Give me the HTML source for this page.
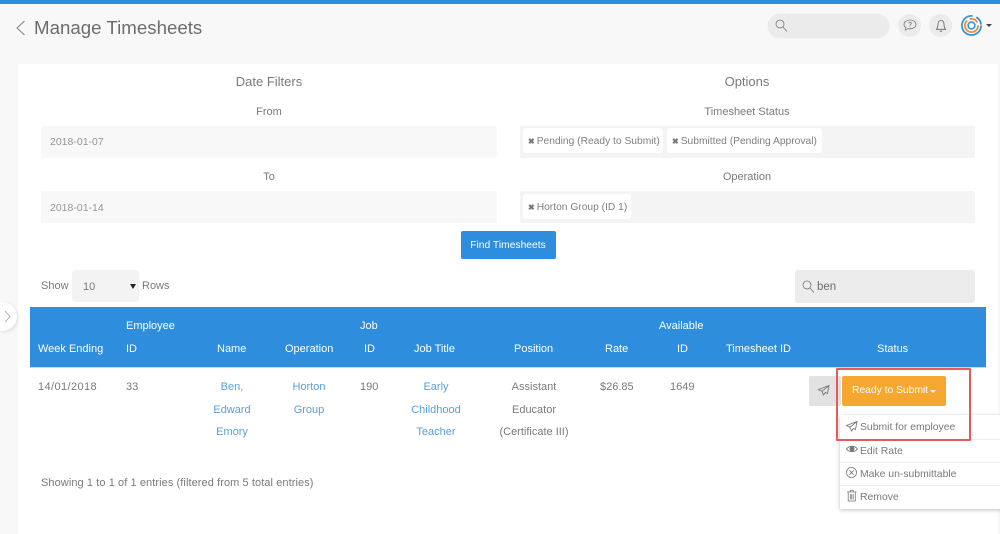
<!DOCTYPE html>
<html>
<head>
<meta charset="utf-8">
<style>
html,body{margin:0;padding:0;width:1000px;height:534px;overflow:hidden;background:#f8f8f8;font-family:"Liberation Sans",sans-serif;color:#7a7a7a;}
.a{position:absolute;}
.t{position:absolute;white-space:nowrap;font-size:11px;line-height:14px;}
.c{transform:translateX(-50%);}
.l{color:#5a9fd9;}
.h{color:#fff;font-weight:400;font-size:11px;}
.chip{position:absolute;background:#fff;border-radius:3px;height:25px;line-height:27px;font-size:10.25px;white-space:nowrap;color:#808080;box-sizing:border-box;padding-left:5px;}
.chip b{font-size:8px;color:#777;margin-right:2px;}
.inp{position:absolute;background:#f4f4f4;border-radius:2px;}
svg{position:absolute;overflow:visible;}
</style>
</head>
<body>
<div class="a" style="left:0;top:0;width:1000px;height:4px;background:#2e8ddc;"></div>

<svg style="left:15px;top:20px" width="12" height="16" fill="none" stroke="#777" stroke-width=".9"><path d="M9.5 1 L2 8 L9.5 15"/></svg>
<div class="t" style="left:34px;top:16px;font-size:18.7px;line-height:24px;color:#6c6c6c;">Manage Timesheets</div>

<div class="a" style="left:768px;top:14px;width:121px;height:24px;background:#ebebeb;border-radius:12px;box-shadow:0 0 1px #ddd;"></div>
<svg style="left:775px;top:19px" width="13" height="13" fill="none" stroke="#777" stroke-width=".8"><circle cx="5" cy="5" r="4"/><path d="M8 8 L12 12.5"/></svg>
<div class="a" style="left:898px;top:14px;width:23px;height:23px;background:#ebebeb;border-radius:50%;"></div>
<svg style="left:903px;top:19px" width="14" height="13" fill="none" stroke="#777" stroke-width=".8"><path d="M7 1 C3.5 1 1 3 1 5.5 C1 7 2 8 3 8.7 L2.3 11 L5 9.7 C8 10.2 13 9 13 5.5 C13 3 10.5 1 7 1Z"/><path d="M5.6 4.2 C6 2.8 8.4 3 8.3 4.5 C8.2 5.5 7 5.5 7 6.7 M7 7.6V8.4"/></svg>
<div class="a" style="left:929px;top:14px;width:23px;height:23px;background:#ebebeb;border-radius:50%;"></div>
<svg style="left:935px;top:19px" width="12" height="14" fill="none" stroke="#666" stroke-width=".8"><path d="M6 1.5 C3.5 1.5 3 3.5 3 5.5 C3 8 2.5 9 1.5 10.3 H10.5 C9.5 9 9 8 9 5.5 C9 3.5 8.5 1.5 6 1.5Z"/><path d="M4.8 11.5 C5.2 12.6 6.8 12.6 7.2 11.5" /></svg>
<svg style="left:961px;top:15px" width="22" height="22" fill="none">
<circle cx="10.5" cy="10.5" r="9.6" stroke="#3596d8" stroke-width="1.8" stroke-dasharray="46 4 9 1"/>
<circle cx="10.5" cy="10.5" r="6.6" stroke="#ef8b3c" stroke-width="1.8" stroke-dasharray="26 3 9 3"/>
<circle cx="10.5" cy="10.5" r="3.4" stroke="#3596d8" stroke-width="1.6"/>
</svg>
<div class="a" style="left:986px;top:24px;width:0;height:0;border:3px solid transparent;border-top:3px solid #444;"></div>

<div class="a" style="left:18px;top:64px;width:980px;height:470px;background:#fff;"></div>

<div class="t c" style="left:269px;top:74px;font-size:13px;line-height:16px;">Date Filters</div>
<div class="t c" style="left:747px;top:74px;font-size:13px;line-height:16px;">Options</div>
<div class="t c" style="left:269px;top:105px;">From</div>
<div class="t c" style="left:747px;top:105px;">Timesheet Status</div>

<div class="inp" style="left:41px;top:126px;width:456px;height:32px;background:#f8f8f8;"></div>
<div class="t" style="left:50px;top:135px;font-size:10.5px;color:#969696;">2018-01-07</div>
<div class="inp" style="left:520px;top:126px;width:455px;height:32px;"></div>
<div class="chip" style="left:523px;top:128px;width:140px;"><b>✖</b>Pending (Ready to Submit)</div>
<div class="chip" style="left:667px;top:128px;width:155px;"><b>✖</b>Submitted (Pending Approval)</div>

<div class="t c" style="left:269px;top:170px;">To</div>
<div class="t c" style="left:747px;top:170px;">Operation</div>
<div class="inp" style="left:41px;top:191px;width:456px;height:32px;background:#f8f8f8;"></div>
<div class="t" style="left:50px;top:201px;font-size:10.5px;color:#969696;">2018-01-14</div>
<div class="inp" style="left:520px;top:191px;width:455px;height:32px;"></div>
<div class="chip" style="left:523px;top:194px;width:108px;"><b>✖</b>Horton Group (ID 1)</div>

<div class="a" style="left:461px;top:231px;width:95px;height:28px;background:#2e8ddc;border-radius:2px;"></div>
<div class="t c" style="left:508px;top:239px;color:#fff;font-size:10.3px;">Find Timesheets</div>

<div class="t" style="left:41px;top:279px;">Show</div>
<div class="a" style="left:72px;top:270px;width:67px;height:32px;background:#f3f3f3;border-radius:3px;"></div>
<div class="t" style="left:83px;top:280px;">10</div>
<div class="a" style="left:130px;top:284px;width:0;height:0;border:3px solid transparent;border-top:5px solid #222;"></div>
<div class="t" style="left:142px;top:279px;">Rows</div>

<div class="a" style="left:795px;top:270px;width:180px;height:33px;background:#ececec;border-radius:3px;"></div>
<svg style="left:802px;top:280px" width="13" height="13" fill="none" stroke="#777" stroke-width=".8"><circle cx="5" cy="5" r="4"/><path d="M8 8 L12 12.5"/></svg>
<div class="t" style="left:817px;top:280px;font-size:11.5px;color:#6c6c6c;">ben</div>

<div class="a" style="left:0;top:302px;width:17px;height:29px;background:#fff;border-radius:0 15px 15px 0;box-shadow:1px 1px 3px rgba(0,0,0,.12);"></div>
<svg style="left:4px;top:310px" width="7" height="13" fill="none" stroke="#aaa" stroke-width=".9"><path d="M1 1 L6 6.5 L1 12"/></svg>

<div class="a" style="left:30px;top:307px;width:956px;height:60px;background:#2e8ddc;border-bottom:1px solid #d8d8d8;"></div>
<div class="t h" style="left:126px;top:319px;">Employee</div>
<div class="t h" style="left:360px;top:319px;">Job</div>
<div class="t h" style="left:659px;top:319px;">Available</div>
<div class="t h" style="left:38px;top:342px;">Week Ending</div>
<div class="t h" style="left:126px;top:342px;">ID</div>
<div class="t h" style="left:217px;top:342px;">Name</div>
<div class="t h" style="left:285px;top:342px;">Operation</div>
<div class="t h" style="left:364px;top:342px;">ID</div>
<div class="t h" style="left:414px;top:342px;">Job Title</div>
<div class="t h" style="left:514px;top:342px;">Position</div>
<div class="t h" style="left:605px;top:342px;">Rate</div>
<div class="t h" style="left:677px;top:342px;">ID</div>
<div class="t h" style="left:726px;top:342px;">Timesheet ID</div>
<div class="t h" style="left:877px;top:342px;">Status</div>

<div class="t" style="left:38px;top:380px;letter-spacing:.4px;">14/01/2018</div>
<div class="t" style="left:126px;top:380px;">33</div>
<div class="t c l" style="left:232px;top:380px;">Ben,</div>
<div class="t c l" style="left:232px;top:403px;">Edward</div>
<div class="t c l" style="left:232px;top:425px;">Emory</div>
<div class="t c l" style="left:309px;top:380px;">Horton</div>
<div class="t c l" style="left:309px;top:403px;">Group</div>
<div class="t" style="left:360px;top:380px;">190</div>
<div class="t c l" style="left:436px;top:380px;">Early</div>
<div class="t c l" style="left:436px;top:403px;">Childhood</div>
<div class="t c l" style="left:436px;top:425px;">Teacher</div>
<div class="t c" style="left:534px;top:380px;">Assistant</div>
<div class="t c" style="left:534px;top:403px;">Educator</div>
<div class="t c" style="left:534px;top:425px;">(Certificate III)</div>
<div class="t" style="left:600px;top:380px;">$26.85</div>
<div class="t" style="left:670px;top:380px;">1649</div>

<div class="t" style="left:41px;top:476px;letter-spacing:.08px;">Showing 1 to 1 of 1 entries (filtered from 5 total entries)</div>

<div class="a" style="left:809px;top:376px;width:32px;height:30px;background:#e2e2e2;border-radius:2px;"></div>
<svg style="left:818px;top:385px" width="12" height="11" fill="none" stroke="#777" stroke-width=".9"><path d="M11 .5 L.5 4.5 L4 6.2 L5.5 10 L7.5 7.5 L9.5 8.5Z M11 .5 L4 6.2"/></svg>
<div class="a" style="left:842px;top:376px;width:104px;height:30px;background:#f6a730;border-radius:2px;"></div>
<div class="t" style="left:852px;top:384px;color:#fff;font-size:10.4px;letter-spacing:-.05px;">Ready to Submit</div>
<div class="a" style="left:930px;top:390px;width:0;height:0;border:3px solid transparent;border-top:3px solid #fff;"></div>

<div class="a" style="left:840px;top:415px;width:165px;height:94px;background:#fff;box-shadow:0 1px 4px rgba(0,0,0,.25);"></div>
<div class="a" style="left:840px;top:439px;width:160px;height:1px;background:#eee;"></div>
<div class="a" style="left:840px;top:462px;width:160px;height:1px;background:#eee;"></div>
<div class="a" style="left:840px;top:485px;width:160px;height:1px;background:#eee;"></div>
<svg style="left:846px;top:421px" width="12" height="11" fill="none" stroke="#777" stroke-width=".9"><path d="M11 .5 L.5 4.5 L4 6.2 L5.5 10 L7.5 7.5 L9.5 8.5Z M11 .5 L4 6.2"/></svg>
<div class="t" style="left:860px;top:421px;font-size:10.4px;">Submit for employee</div>
<svg style="left:846px;top:445px" width="12" height="9" fill="none" stroke="#777" stroke-width=".9"><path d="M.5 4 C3 .5 9 .5 11.5 4 C9 7.5 3 7.5 .5 4Z"/><circle cx="6" cy="4" r="2" fill="#777"/></svg>
<div class="t" style="left:860px;top:445px;font-size:10.4px;">Edit Rate</div>
<svg style="left:846px;top:467px" width="12" height="12" fill="none" stroke="#777" stroke-width=".8"><circle cx="5.5" cy="5.5" r="5"/><path d="M3.3 3.3 L7.7 7.7 M7.7 3.3 L3.3 7.7"/></svg>
<div class="t" style="left:860px;top:468px;font-size:10.4px;">Make un-submittable</div>
<svg style="left:847px;top:490px" width="10" height="12" fill="none" stroke="#777" stroke-width=".8"><path d="M0 2 H9.5 M3.2 2 V.5 H6.3 V2 M1.2 2 V11 H8.3 V2 M3.3 4 V9.5 M4.75 4 V9.5 M6.2 4 V9.5"/></svg>
<div class="t" style="left:860px;top:491px;font-size:10.4px;">Remove</div>

<div class="a" style="left:836px;top:368px;width:135px;height:73px;border:2.5px solid #e9595c;box-sizing:border-box;border-radius:1px;"></div>
</body>
</html>
